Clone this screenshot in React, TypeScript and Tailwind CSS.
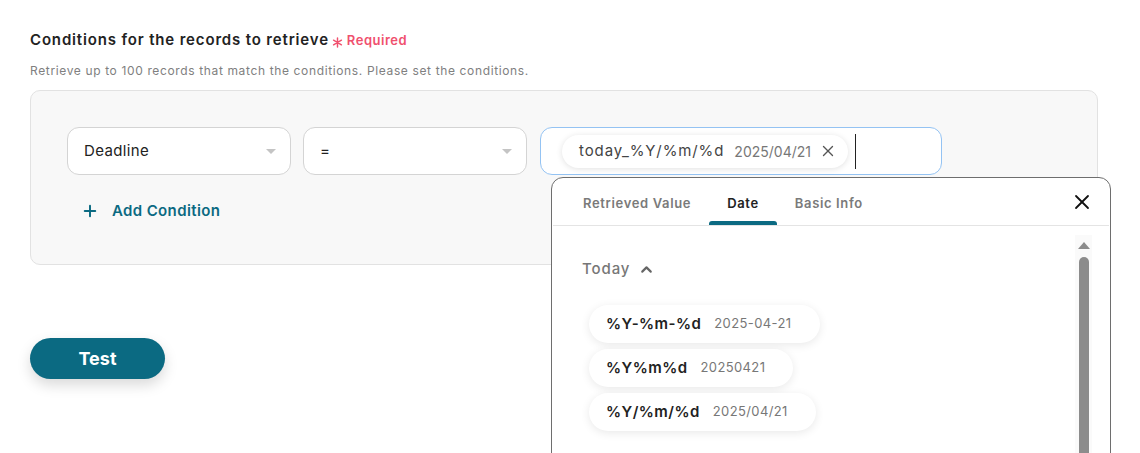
import React from 'react';
import { X, Plus, ChevronUp } from 'lucide-react';

const formats = [
  { fmt: '%Y-%m-%d', value: '2025-04-21' },
  { fmt: '%Y%m%d', value: '20250421' },
  { fmt: '%Y/%m/%d', value: '2025/04/21' },
];

const tabs = ['Retrieved Value', 'Date', 'Basic Info'];

const Select = ({ label }: { label: string }) => (
  <div className="w-[224px] h-[48px] rounded-[12px] border border-[#d4d4d4] bg-white flex items-center justify-between pl-[16px] pr-[14px]">
    <span className="text-[15px] tracking-[0.025em] text-[#222]">{label}</span>
    <span className="w-0 h-0 border-l-[5px] border-r-[5px] border-t-[5px] border-l-transparent border-r-transparent border-t-[#c4c4c4]" />
  </div>
);

export default function App() {
  return (
    <div className="min-h-screen bg-white px-[30px] pt-[30px] overflow-hidden" style={{ fontFamily: 'Inter, "Noto Sans", sans-serif' }}>
      {/* Heading */}
      <div className="flex items-center h-[20px]">
        <h2 className="text-[15px] font-semibold tracking-[0.056em] text-[#222] leading-[20px]">Conditions for the records to retrieve</h2>
        <svg viewBox="0 0 12 12" className="ml-[3px] mt-[5px] w-[11px] h-[11px] text-[#f0506e]" fill="none" stroke="currentColor" strokeWidth="1.6" strokeLinecap="round">
          <path d="M6 1v10M1.7 3.5l8.6 5M10.3 3.5l-8.6 5" />
        </svg>
        <span className="ml-[4px] mt-[2px] text-[13px] font-semibold tracking-[0.04em] text-[#f0506e]">Required</span>
      </div>
      <p className="mt-[13px] text-[12px] leading-[16px] tracking-[0.053em] text-[#808080]">
        Retrieve up to 100 records that match the conditions. Please set the conditions.
      </p>

      {/* Conditions panel */}
      <div className="mt-[11px] w-[1068px] rounded-[10px] border border-[#e2e2e2] bg-[#f8f8f8] pl-[36px] pt-[36px] pb-[43px]">
        <div className="flex items-center">
          <Select label="Deadline" />
          <div className="ml-[12px]"><Select label="=" /></div>

          <div className="relative ml-[13px]">
            <div className="w-[402px] h-[48px] rounded-[12px] border border-[#94c3f3] bg-white flex items-center pl-[21px]">
              <div className="h-[33px] rounded-full bg-white shadow-[0_1px_6px_rgba(0,0,0,0.12)] flex items-center pl-[17px] pr-[11px]">
                <span className="text-[15px] tracking-[0.06em] text-[#444]">today_%Y/%m/%d</span>
                <span className="ml-[10px] text-[14px] text-[#777]">2025/04/21</span>
                <X className="ml-[8px] w-[18px] h-[18px] text-[#555]" strokeWidth={1.8} />
              </div>
              <div className="ml-[7px] w-px h-[35px] bg-[#222]" />
            </div>

            {/* Popover */}
            <div className="absolute left-[11px] top-[50px] w-[560px] h-[300px] bg-white border border-[#6e6e6e] rounded-t-[12px] z-10">
              <div className="flex items-center justify-between border-b border-[#e4e4e4] mx-[1px] h-[48px] pl-[12px] pr-[15px]">
                <div className="flex h-full">
                  {tabs.map((t) => {
                    const active = t === 'Date';
                    return (
                      <div key={t} className="relative px-[18px] flex items-center h-full pt-[4px]">
                        <span className={active ? 'text-[13px] font-semibold tracking-[0.05em] text-[#222]' : 'text-[13px] font-semibold tracking-[0.05em] text-[#7a7a7a]'}>{t}</span>
                        {active && <span className="absolute left-0 right-0 bottom-0 h-[4px] rounded-t-[3px] bg-[#0b6a82]" />}
                      </div>
                    );
                  })}
                </div>
                <X className="w-[24px] h-[24px] text-[#111]" strokeWidth={1.8} />
              </div>

              <div className="flex">
                <div className="flex-1 pl-[30px] pt-[32px]">
                  <div className="flex items-center h-[22px]">
                    <span className="text-[15px] font-medium tracking-[0.06em] text-[#777]">Today</span>
                    <ChevronUp className="ml-[8px] w-[17px] h-[17px] text-[#666]" strokeWidth={3} />
                  </div>
                  <div className="mt-[25px] ml-[7px] flex flex-col items-start gap-[6px]">
                    {formats.map((f) => (
                      <div key={f.fmt} className="h-[38px] rounded-full bg-white shadow-[0_2px_10px_rgba(0,0,0,0.09)] flex items-center pl-[17px] pr-[28px]">
                        <span className="text-[15px] font-semibold tracking-[0.03em] text-[#222]">{f.fmt}</span>
                        <span className="ml-[13px] text-[13px] tracking-[0.03em] text-[#777]">{f.value}</span>
                      </div>
                    ))}
                  </div>
                </div>
                {/* Scrollbar */}
                <div className="mr-[18px] mt-[9px] w-[17px] h-[260px] bg-[#fafafa] flex flex-col items-center pt-[7px]">
                  <span className="w-0 h-0 border-l-[6px] border-r-[6px] border-b-[7px] border-l-transparent border-r-transparent border-b-[#8c8c8c]" />
                  <div className="mt-[8px] w-[10px] flex-1 rounded-t-full bg-[#8c8c8c]" />
                </div>
              </div>
            </div>
          </div>
        </div>

        <div className="mt-[26px] ml-[14px] flex items-center h-[20px]">
          <Plus className="w-[18px] h-[18px] text-[#0b6a82]" strokeWidth={2.6} />
          <span className="ml-[13px] text-[15px] font-semibold tracking-[0.025em] text-[#0b6a82]">Add Condition</span>
        </div>
      </div>

      <button className="mt-[73px] w-[135px] h-[41px] rounded-full bg-[#0b6a82] text-white text-[18px] font-bold shadow-[0_6px_14px_rgba(0,0,0,0.15)]">
        Test
      </button>
    </div>
  );
}
